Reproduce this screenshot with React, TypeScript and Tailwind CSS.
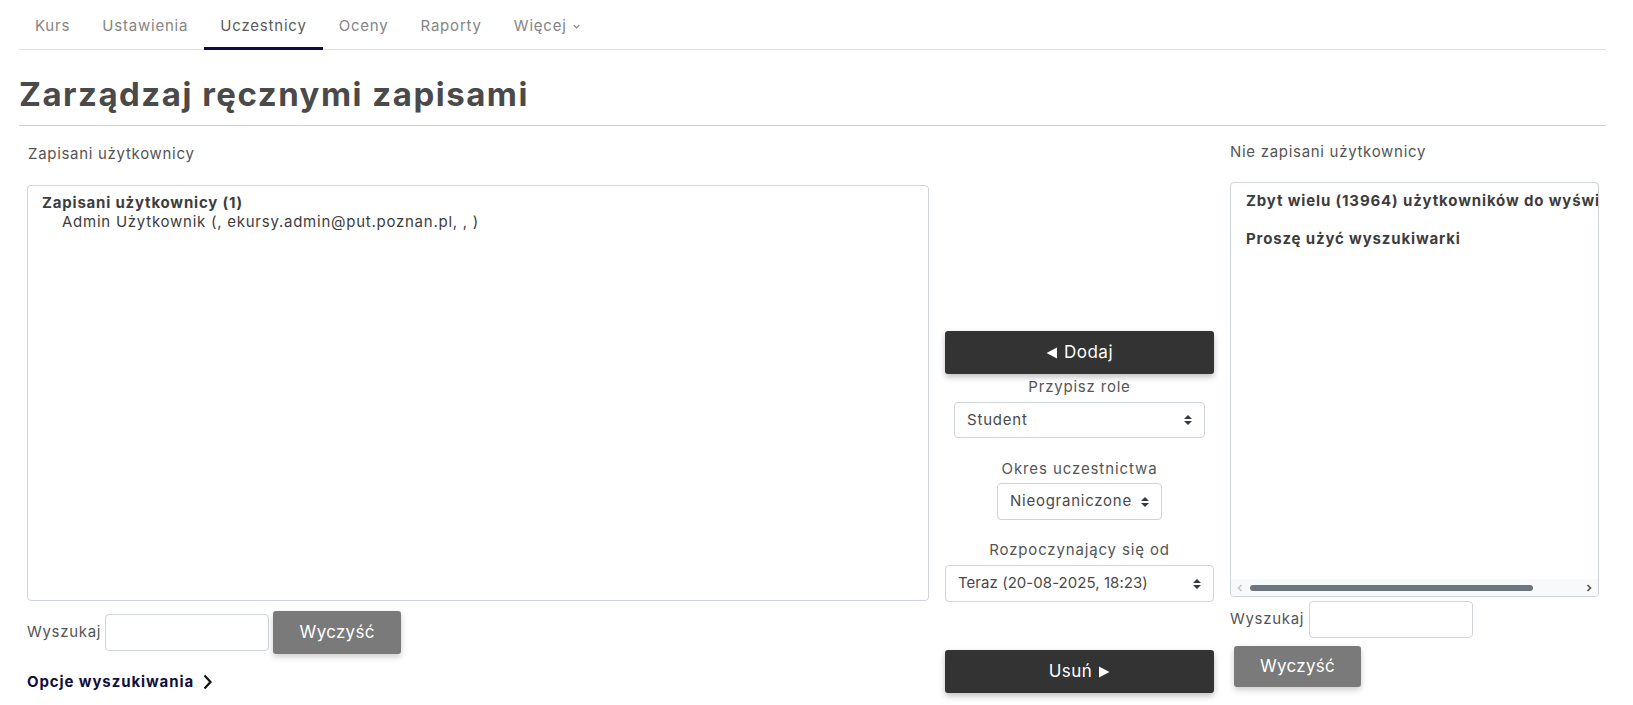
import React from "react";

const Caret = () => (
  <svg width="8" height="10" viewBox="0 0 4 5" className="shrink-0">
    <path fill="#343a40" d="M2 0L0 2h4zm0 5L0 3h4z" />
  </svg>
);

function Select({ text, className }: { text: string; className: string }) {
  return (
    <div
      className={
        "flex items-center justify-between rounded-[4px] border border-[#ced4da] bg-white pl-3 pr-3 text-[15px] text-[#4a4a4a] " +
        className
      }
    >
      <span className="whitespace-nowrap">{text}</span>
      <Caret />
    </div>
  );
}

function DarkButton({ children }: { children: React.ReactNode }) {
  return (
    <div className="flex h-[43px] w-full items-center justify-center gap-[6px] rounded-[3px] bg-[#333333] text-[17px] tracking-[0.5px] text-white shadow-[0_3px_6px_rgba(0,0,0,0.25)]">
      {children}
    </div>
  );
}

function GrayButton({ className }: { className: string }) {
  return (
    <div
      className={
        "flex items-center justify-center rounded-[3px] bg-[#7a7a7a] text-[17px] tracking-[0.3px] text-white shadow-[0_3px_6px_rgba(0,0,0,0.2)] " +
        className
      }
    >
      Wyczyść
    </div>
  );
}

export default function App() {
  const nav = ["Kurs", "Ustawienia", "Uczestnicy", "Oceny", "Raporty"];
  return (
    <div className="min-h-screen bg-white font-['Inter',sans-serif] text-[15px] tracking-[0.7px] text-[#4a4a4a]">
      <div className="pl-[19px] pr-[27px]">
        <nav className="flex h-[50px] border-b border-[#dee2e6]">
          {nav.map((n) => (
            <div
              key={n}
              className={
                "flex h-[50px] items-center px-4 pt-[3px] text-[15px] tracking-[0.8px] " +
                (n === "Uczestnicy"
                  ? "border-b-[3px] border-[#0b0b4d] pt-[6px] text-[#5c5c5c]"
                  : "text-[#858585]")
              }
            >
              {n}
            </div>
          ))}
          <div className="flex h-[50px] items-center gap-[5px] px-4 pt-[3px] text-[15px] tracking-[0.8px] text-[#858585]">
            Więcej
            <svg width="9" height="9" viewBox="0 0 10 10">
              <path d="M2 3.5l3 3 3-3" fill="none" stroke="#808080" strokeWidth="1.3" />
            </svg>
          </div>
        </nav>

        <h2 className="mt-[25px] border-b border-[#cfcfcf] pb-[12px] text-[33px] font-bold leading-[38px] tracking-[1.5px] text-[#4a4a4a]">
          Zarządzaj ręcznymi zapisami
        </h2>

        <div className="mt-[17px] flex">
          {/* left */}
          <div className="ml-[8px] flex w-[902px] flex-col">
            <div className="pl-[1px] text-[15px] leading-[22px] text-[#555]">
              Zapisani użytkownicy
            </div>
            <div className="mt-[20px] h-[416px] rounded-[4px] border border-[#ced4da] px-[14px] pt-[7px] text-[15px] leading-[19px]">
              <div className="font-bold tracking-[0.8px] text-[#3d3d3d]">Zapisani użytkownicy (1)</div>
              <div className="pl-[20px] tracking-[0.75px] text-[#3d3d3d]">
                Admin Użytkownik (, ekursy.admin@put.poznan.pl, , )
              </div>
            </div>
            <div className="mt-[10px] flex items-center">
              <span className="text-[#555]">Wyszukaj</span>
              <div className="ml-[4px] h-[37px] w-[164px] rounded-[4px] border border-[#ced4da]" />
              <GrayButton className="ml-[4px] h-[43px] w-[128px]" />
            </div>
            <div className="mt-[17px] flex items-center gap-[8px] font-bold tracking-[0.9px] text-[#10103c]">
              Opcje wyszukiwania
              <svg width="11" height="16" viewBox="0 0 11 16">
                <path d="M2.5 1.5l6 6.5-6 6.5" fill="none" stroke="#111" strokeWidth="2.2" />
              </svg>
            </div>
          </div>

          {/* middle */}
          <div className="ml-[16px] flex w-[269px] flex-col items-center pt-[188px] text-[#555]">
            <DarkButton>
              <svg width="12" height="12" viewBox="0 0 12 12">
                <path d="M11 0.5v11L0.5 6z" fill="#fff" />
              </svg>
              Dodaj
            </DarkButton>
            <div className="mt-[3px] leading-[20px] tracking-[0.8px]">Przypisz role</div>
            <Select text="Student" className="mt-[5px] h-[36px] w-[251px] tracking-[0.8px]" />
            <div className="mt-[21px] leading-[20px] tracking-[0.9px]">Okres uczestnictwa</div>
            <Select text="Nieograniczone" className="mt-[4px] h-[37px] w-[165px] gap-[6px] tracking-[0.75px]" />
            <div className="mt-[20px] leading-[20px] tracking-[0.85px]">Rozpoczynający się od</div>
            <Select text="Teraz (20-08-2025, 18:23)" className="mt-[5px] h-[37px] w-[269px] tracking-[0.05px]" />
            <div className="mt-[48px] w-full">
              <DarkButton>
                Usuń
                <svg width="12" height="12" viewBox="0 0 12 12">
                  <path d="M1 0.5v11L11.5 6z" fill="#fff" />
                </svg>
              </DarkButton>
            </div>
          </div>

          {/* right */}
          <div className="ml-[16px] flex w-[369px] flex-col">
            <div className="-mt-[2px] leading-[22px] text-[#555]">Nie zapisani użytkownicy</div>
            <div className="mt-[19px] flex h-[415px] flex-col overflow-hidden rounded-[4px] border border-[#ced4da]">
              <div className="flex-1 overflow-hidden whitespace-nowrap pl-[15px] pt-[8px] font-bold leading-[19px] tracking-[0.85px] text-[#3d3d3d]">
                <div>Zbyt wielu (13964) użytkowników do wyświetlenia</div>
                <div className="mt-[19px]">Proszę użyć wyszukiwarki</div>
              </div>
              <div className="flex h-[17px] items-center bg-[#f8f9fa] px-[5px]">
                <svg width="8" height="8" viewBox="0 0 8 8">
                  <path d="M5.5 1L2.5 4l3 3" fill="none" stroke="#c4c4c4" strokeWidth="1.5" />
                </svg>
                <div className="ml-[6px] h-[6px] w-[283px] rounded-full bg-[#6c757d]" />
                <div className="flex-1" />
                <svg width="8" height="8" viewBox="0 0 8 8">
                  <path d="M2.5 1l3 3-3 3" fill="none" stroke="#505050" strokeWidth="1.6" />
                </svg>
              </div>
            </div>
            <div className="mt-[4px] flex items-center">
              <span className="text-[#555]">Wyszukaj</span>
              <div className="ml-[5px] h-[37px] w-[164px] rounded-[4px] border border-[#ced4da]" />
            </div>
            <GrayButton className="ml-[4px] mt-[8px] h-[41px] w-[127px]" />
          </div>
        </div>
      </div>
    </div>
  );
}
